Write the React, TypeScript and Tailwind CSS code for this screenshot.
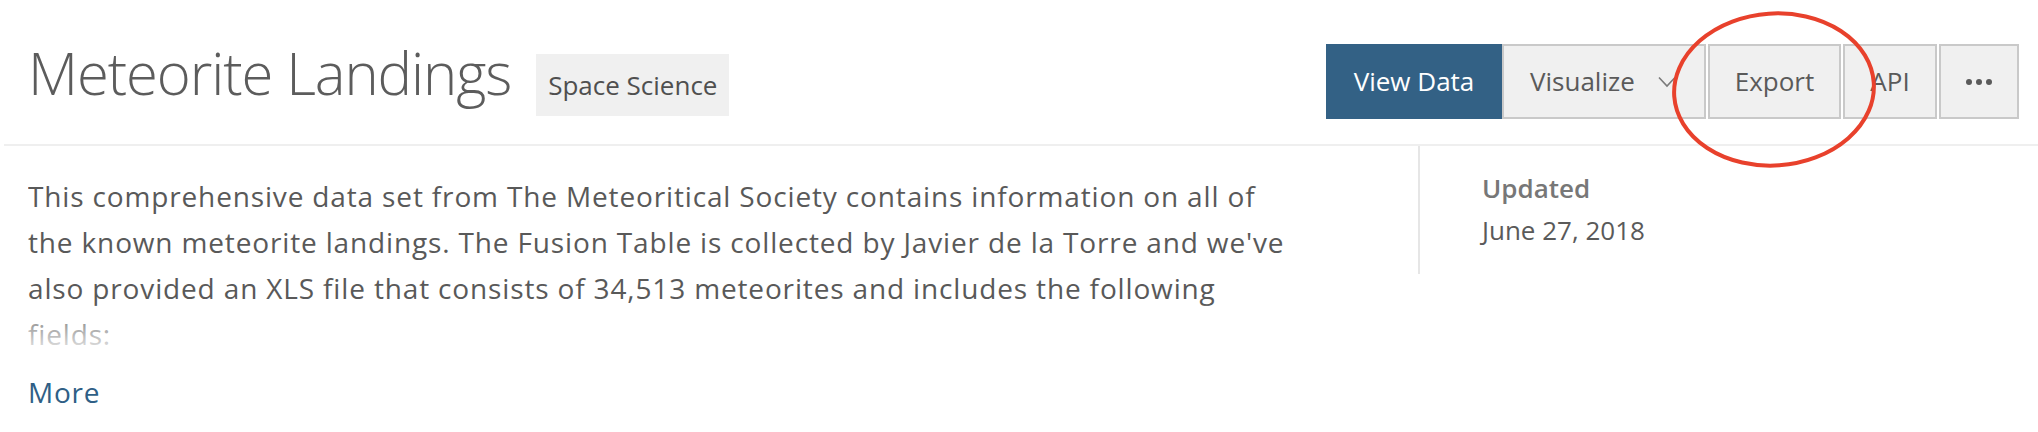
import React from 'react'

const description =
  "This comprehensive data set from The Meteoritical Society contains information on all of the known meteorite landings. The Fusion Table is collected by Javier de la Torre and we've also provided an XLS file that consists of 34,513 meteorites and includes the following fields:"

const ChevronDown: React.FC = () => (
  <svg width="18" height="12" viewBox="0 0 18 12" fill="none" className="block">
    <path d="M1 1.5 L9 10 L17 1.5" stroke="#7a7a7a" strokeWidth="1.6" />
  </svg>
)

const App: React.FC = () => {
  return (
    <div className="relative w-[2038px] h-[432px] bg-white pl-[4px] font-['Open_Sans',sans-serif] overflow-hidden">
      {/* header */}
      <div className="flex justify-between items-start h-[146px] pt-[44px] pl-[24px] pr-[19px] border-b-2 border-[#efefef]">
        <div className="flex items-baseline gap-[25px]">
          <h1 className="text-[58px] leading-[58px] font-light tracking-[-1.1px] text-[#5c5c5c]">Meteorite Landings</h1>
          <span className="inline-flex items-center px-[12px] py-[13px] leading-[36px] text-[26px] text-[#4f4f4f] bg-[#f0f0f0]">
            Space Science
          </span>
        </div>
        <div className="flex text-[26px] text-[#5a5a5a]">
          <button type="button" className="h-[75px] w-[176px] bg-[#336185] text-white flex items-center justify-center">
            View Data
          </button>
          <button type="button" className="h-[75px] w-[204px] bg-[#f0f0f0] border-2 border-[#c9c9c9] flex items-center pl-[26px] gap-[23px]">
            <span>Visualize</span>
            <ChevronDown />
          </button>
          <button type="button" className="ml-[2px] h-[75px] w-[133px] bg-[#f0f0f0] border-2 border-[#c9c9c9] flex items-center justify-center">
            Export
          </button>
          <button type="button" className="ml-[2px] h-[75px] w-[94px] bg-[#f0f0f0] border-2 border-[#c9c9c9] flex items-center justify-center">
            API
          </button>
          <button type="button" className="ml-[2px] h-[75px] w-[80px] bg-[#f0f0f0] border-2 border-[#c9c9c9] flex items-center justify-center gap-[4px]">
            <span className="w-[6px] h-[6px] rounded-full bg-[#5a5a5a]" />
            <span className="w-[6px] h-[6px] rounded-full bg-[#5a5a5a]" />
            <span className="w-[6px] h-[6px] rounded-full bg-[#5a5a5a]" />
          </button>
        </div>
      </div>

      {/* body */}
      <div className="flex">
        <div className="w-[1414px] pl-[24px] pt-[27px]">
          <div className="relative w-[1272px] h-[184px] overflow-hidden">
            <p className="text-[28px] leading-[46px] tracking-[0.85px] text-[#595959]">{description}</p>
            <div className="absolute left-0 right-0 bottom-0 h-[52px] bg-gradient-to-b from-white/10 to-white/95" />
          </div>
          <a href="#" className="block mt-[12px] text-[28px] leading-[46px] tracking-[0.75px] text-[#2f5f86]">More</a>
        </div>
        <div className="h-[128px] border-l-2 border-[#e6e6e6] pl-[62px] pt-[21px] text-[26px] leading-[42px]">
          <div className="font-semibold text-[#777777]">Updated</div>
          <div className="text-[#5a5a5a]">June 27, 2018</div>
        </div>
      </div>

      {/* annotation */}
      <svg className="absolute left-0 top-0 pointer-events-none" width="2038" height="432">
        <ellipse cx="1774" cy="89.5" rx="100" ry="76" fill="none" stroke="#e8412c" strokeWidth="4" transform="rotate(-4 1774 89.5)" />
      </svg>
    </div>
  )
}

export default App
